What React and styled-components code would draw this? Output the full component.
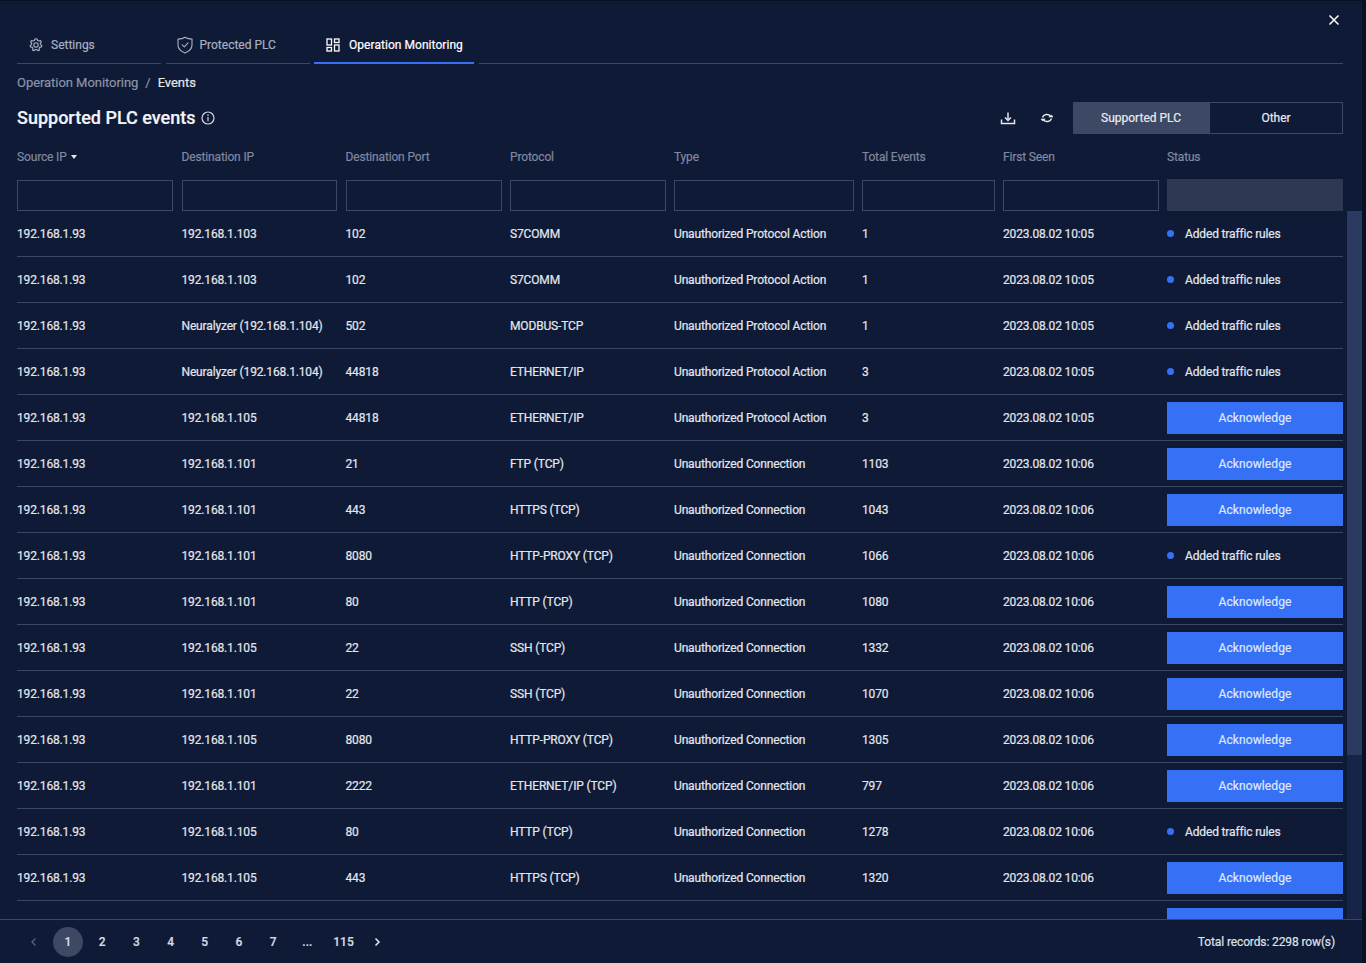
import React from 'react';
import styled, { createGlobalStyle } from 'styled-components';

const rowsData = [
  ['192.168.1.93', '192.168.1.103', '102', 'S7COMM', 'Unauthorized Protocol Action', '1', '2023.08.02 10:05', false],
  ['192.168.1.93', '192.168.1.103', '102', 'S7COMM', 'Unauthorized Protocol Action', '1', '2023.08.02 10:05', false],
  ['192.168.1.93', 'Neuralyzer (192.168.1.104)', '502', 'MODBUS-TCP', 'Unauthorized Protocol Action', '1', '2023.08.02 10:05', false],
  ['192.168.1.93', 'Neuralyzer (192.168.1.104)', '44818', 'ETHERNET/IP', 'Unauthorized Protocol Action', '3', '2023.08.02 10:05', false],
  ['192.168.1.93', '192.168.1.105', '44818', 'ETHERNET/IP', 'Unauthorized Protocol Action', '3', '2023.08.02 10:05', true],
  ['192.168.1.93', '192.168.1.101', '21', 'FTP (TCP)', 'Unauthorized Connection', '1103', '2023.08.02 10:06', true],
  ['192.168.1.93', '192.168.1.101', '443', 'HTTPS (TCP)', 'Unauthorized Connection', '1043', '2023.08.02 10:06', true],
  ['192.168.1.93', '192.168.1.101', '8080', 'HTTP-PROXY (TCP)', 'Unauthorized Connection', '1066', '2023.08.02 10:06', false],
  ['192.168.1.93', '192.168.1.101', '80', 'HTTP (TCP)', 'Unauthorized Connection', '1080', '2023.08.02 10:06', true],
  ['192.168.1.93', '192.168.1.105', '22', 'SSH (TCP)', 'Unauthorized Connection', '1332', '2023.08.02 10:06', true],
  ['192.168.1.93', '192.168.1.101', '22', 'SSH (TCP)', 'Unauthorized Connection', '1070', '2023.08.02 10:06', true],
  ['192.168.1.93', '192.168.1.105', '8080', 'HTTP-PROXY (TCP)', 'Unauthorized Connection', '1305', '2023.08.02 10:06', true],
  ['192.168.1.93', '192.168.1.101', '2222', 'ETHERNET/IP (TCP)', 'Unauthorized Connection', '797', '2023.08.02 10:06', true],
  ['192.168.1.93', '192.168.1.105', '80', 'HTTP (TCP)', 'Unauthorized Connection', '1278', '2023.08.02 10:06', false],
  ['192.168.1.93', '192.168.1.105', '443', 'HTTPS (TCP)', 'Unauthorized Connection', '1320', '2023.08.02 10:06', true],
];

const columns = ['Source IP', 'Destination IP', 'Destination Port', 'Protocol', 'Type', 'Total Events', 'First Seen', 'Status'];
const pages = ['1', '2', '3', '4', '5', '6', '7', '...', '115'];
const gridCols = '164.5px 164px 164.5px 164px 188px 141px 164px 176px';

const GlobalStyle = createGlobalStyle`
  html, body { margin: 0; padding: 0; background: #0a1024; }
  body { font-family: Roboto, "Liberation Sans", sans-serif; overflow: hidden; -webkit-text-stroke: 0.2px; }
`;

const Panel = styled.div`
  width: 1362px;
  height: 962px;
  margin-top: 1px;
  background: #0f1a36;
  position: relative;
  display: flex;
  flex-direction: column;
`;

const CloseButton = styled.button`
  position: absolute;
  top: 12px;
  right: 21px;
  width: 14px;
  height: 14px;
  padding: 0;
  border: 0;
  background: none;
  color: #fff;
  display: flex;
`;

const Tabs = styled.div`
  display: flex;
  gap: 4.5px;
  height: 63px;
  margin: 0 19px 0 17px;
  padding-top: 25px;
  box-sizing: border-box;
`;

const TabItem = styled.div`
  width: ${p => p.$width}px;
  height: 38px;
  box-sizing: border-box;
  display: flex;
  align-items: center;
  gap: ${p => (p.$active ? 9 : 7)}px;
  padding-left: ${p => p.$pad}px;
  padding-top: ${p => (p.$active ? 2 : 1)}px;
  font-size: 12px;
  letter-spacing: ${p => (p.$active ? '0.05px' : '0')};
  color: ${p => (p.$active ? '#ffffff' : '#a9b0c0')};
  border-bottom: ${p => (p.$active ? '2px solid #3671f5' : '1px solid #3b4663')};
`;

const TabFiller = styled.div`
  flex: 1;
  height: 38px;
  box-sizing: border-box;
  border-bottom: 1px solid #3b4663;
`;

const Crumbs = styled.div`
  display: flex;
  gap: 7px;
  height: 38px;
  box-sizing: border-box;
  padding: 0 0 2px 17px;
  align-items: center;
  font-size: 13px;
  letter-spacing: -0.05px;
  color: #8c94a8;
`;

const CrumbCurrent = styled.span`
  color: #e4e7ec;
`;

const TitleBar = styled.div`
  display: flex;
  align-items: center;
  height: 32px;
  margin: 0 19px 0 17px;
`;

const Title = styled.h1`
  margin: 0;
  padding-bottom: 1px;
  font-size: 18px;
  font-weight: 500;
  color: #f2f4f7;
`;

const InfoIcon = styled.span`
  display: flex;
  margin-left: 5px;
  color: #d5d8df;
`;

const Actions = styled.div`
  margin-left: auto;
  display: flex;
  align-items: center;
`;

const IconButton = styled.span`
  display: flex;
  margin-right: ${p => p.$gap}px;
  color: #e4e7ec;
`;

const Toggle = styled.div`
  width: ${p => p.$width}px;
  height: 32px;
  box-sizing: border-box;
  display: flex;
  align-items: center;
  justify-content: center;
  font-size: 12px;
  color: #e8eaef;
  background: ${p => (p.$active ? '#3d4864' : 'transparent')};
  border: 1px solid #3d4864;
`;

const Head = styled.div`
  display: grid;
  grid-template-columns: ${gridCols};
  margin-left: 17px;
  height: 29px;
  margin-top: 8px;
  align-items: center;
`;

const HeadCell = styled.div`
  font-size: 12px;
  letter-spacing: -0.15px;
  color: #8089a0;
  display: flex;
  align-items: center;
  gap: 4px;
`;

const SortCaret = styled.span`
  width: 0;
  height: 0;
  border-left: 3.5px solid transparent;
  border-right: 3.5px solid transparent;
  border-top: 4px solid #e4e7ec;
`;

const Filters = styled.div`
  display: grid;
  grid-template-columns: ${gridCols};
  margin-left: 17px;
  height: 32px;
  margin-top: 8px;
`;

const FilterInput = styled.input`
  width: calc(100% - 8.5px);
  height: 31px;
  margin: 1px 0 0;
  box-sizing: border-box;
  background: transparent;
  border: 1px solid #3d4864;
  outline: none;
  padding: 0;
`;

const FilterBlank = styled.div`
  background: #2e3853;
  height: 32px;
`;

const ScrollArea = styled.div`
  position: relative;
  flex: 1;
  min-height: 0;
  overflow: hidden;
  padding: 0 19px 0 17px;
  border-bottom: 1px solid #3b4663;
`;

const Row = styled.div`
  display: grid;
  grid-template-columns: ${gridCols};
  height: 46px;
  box-sizing: border-box;
  align-items: center;
  border-bottom: 1px solid #3b4663;
  font-size: 12px;
  color: #e4e7ec;
`;

const Cell = styled.div`
  letter-spacing: -0.15px;
  white-space: nowrap;
`;

const Ack = styled.button`
  width: 176px;
  height: 32px;
  padding: 0;
  border: 0;
  background: #3671f5;
  color: #dfe8fd;
  font: inherit;
  letter-spacing: 0.1px;
`;

const StatusText = styled.div`
  display: flex;
  align-items: center;
  gap: 11px;
  letter-spacing: -0.15px;
`;

const Dot = styled.span`
  width: 7px;
  height: 7px;
  border-radius: 50%;
  background: #3671f5;
`;

const CutRow = styled.div`
  height: 18px;
  display: flex;
  justify-content: flex-end;
  padding-top: 7px;
  box-sizing: border-box;
`;

const CutButton = styled.div`
  width: 176px;
  height: 11px;
  background: #3671f5;
`;

const ScrollTrack = styled.div`
  position: absolute;
  top: 0;
  bottom: 0;
  right: 0;
  width: 15px;
  background: #16244a;
`;

const ScrollThumb = styled.div`
  height: 544px;
  background: #2b3a60;
`;

const Footer = styled.div`
  height: 43px;
  display: flex;
  align-items: center;
  margin: 0 27px 0 17px;
  font-size: 12px;
  color: #dfe2e8;
`;

const Pager = styled.div`
  display: flex;
  align-items: center;
  flex: 1;
`;

const ArrowPrev = styled.span`
  display: flex;
  width: 36px;
  padding-left: 13px;
  box-sizing: border-box;
  color: #59627a;
`;

const ArrowNext = styled.span`
  display: flex;
  margin-left: 8px;
  color: #e4e7ec;
`;

const PageBtn = styled.span`
  width: ${p => (p.$wide ? 34 : 30)}px;
  height: 30px;
  margin-right: 4.2px;
  border-radius: 50%;
  display: flex;
  align-items: center;
  justify-content: center;
  font-weight: 500;
  background: ${p => (p.$active ? '#3d4864' : 'transparent')};
  color: #d8dbe2;
`;

const Total = styled.div`
  letter-spacing: -0.12px;
`;

const Glyph = ({ size = 16, children, sw = 1.3 }) => (
  <svg width={size} height={size} viewBox="0 0 16 16" fill="none" stroke="currentColor" strokeWidth={sw} strokeLinecap="round" strokeLinejoin="round">
    {children}
  </svg>
);

const GearIcon = () => (
  <Glyph sw={1.1}>
    <path d="M8 1.8 L9.1 2 L9.6 3.5 L11 4.1 L12.5 3.5 L13.4 4.9 L12.3 6 L12.4 7.5 L13.9 8.4 L13.5 10 L11.9 10.1 L11 11.3 L11.5 12.9 L10 13.7 L8.9 12.6 L7.1 12.6 L6 13.7 L4.5 12.9 L5 11.3 L4.1 10.1 L2.5 10 L2.1 8.4 L3.6 7.5 L3.7 6 L2.6 4.9 L3.5 3.5 L5 4.1 L6.4 3.5 L6.9 2 Z" />
    <circle cx="8" cy="7.9" r="2.2" />
  </Glyph>
);

const ShieldIcon = () => (
  <svg width="16" height="18" viewBox="0 0 16 18" fill="none" stroke="currentColor" strokeWidth="1.1" strokeLinejoin="round" strokeLinecap="round">
    <path d="M8 1.2 C10 2.4 12.5 3 15 3.1 L15 9 C15 12.6 12 15.4 8 17 C4 15.4 1 12.6 1 9 L1 3.1 C3.5 3 6 2.4 8 1.2 Z" />
    <path d="M5.2 8.8 L7.3 10.8 L11 6.8" />
  </svg>
);

const GridIcon = () => (
  <svg width="14" height="14" viewBox="0 0 14 14" fill="none" stroke="currentColor" strokeWidth="1.3">
    <rect x="1" y="1" width="4.5" height="6" />
    <rect x="8.5" y="1" width="4.5" height="3.5" />
    <rect x="8.5" y="7" width="4.5" height="6" />
    <rect x="1" y="9.5" width="4.5" height="3.5" />
  </svg>
);

const DownloadIcon = () => (
  <svg width="16" height="16" viewBox="0 0 16 16" fill="none" stroke="currentColor" strokeWidth="1.5">
    <path d="M1.5 9.5 V13.5 H14.5 V9.5" />
    <path d="M8 2.5 V10" />
    <path d="M5 7.5 L8 10.5 L11 7.5" />
  </svg>
);

const RefreshIcon = () => (
  <svg width="16" height="16" viewBox="0 0 16 16" fill="none" stroke="currentColor" strokeWidth="1.5">
    <path d="M3.5 7.5 A4.6 4.2 0 0 1 11.5 6" />
    <path d="M12.5 8.5 A4.6 4.2 0 0 1 4.5 10" />
    <path d="M9.8 7 H14 L12.5 5 Z" fill="currentColor" strokeWidth="0.6" />
    <path d="M6.2 9 H2 L3.5 11 Z" fill="currentColor" strokeWidth="0.6" />
  </svg>
);

export default function App() {
  return (
    <Panel>
      <GlobalStyle />
      <CloseButton aria-label="Close">
        <svg width="14" height="14" viewBox="0 0 14 14" stroke="currentColor" strokeWidth="1.5">
          <path d="M2.5 2.5 L11.5 11.5 M11.5 2.5 L2.5 11.5" />
        </svg>
      </CloseButton>

      <Tabs>
        <TabItem $width={144} $pad={11}><GearIcon />Settings</TabItem>
        <TabItem $width={144} $pad={11}><ShieldIcon />Protected PLC</TabItem>
        <TabItem $width={160} $pad={12} $active><GridIcon />Operation Monitoring</TabItem>
        <TabFiller />
      </Tabs>

      <Crumbs>
        <span>Operation Monitoring</span>
        <span>/</span>
        <CrumbCurrent>Events</CrumbCurrent>
      </Crumbs>

      <TitleBar>
        <Title>Supported PLC events</Title>
        <InfoIcon>
          <svg width="14" height="14" viewBox="0 0 14 14" fill="none" stroke="currentColor" strokeWidth="1.2">
            <circle cx="7" cy="7" r="6" />
            <path d="M7 6 V10.2" />
            <path d="M7 3.6 V5" />
          </svg>
        </InfoIcon>
        <Actions>
          <IconButton $gap={23}><DownloadIcon /></IconButton>
          <IconButton $gap={18}><RefreshIcon /></IconButton>
          <Toggle $width={136} $active>Supported PLC</Toggle>
          <Toggle $width={134}>Other</Toggle>
        </Actions>
      </TitleBar>

      <Head>
        {columns.map((c, i) => (
          <HeadCell key={c}>
            {c}
            {i === 0 && <SortCaret />}
          </HeadCell>
        ))}
      </Head>

      <Filters>
        {columns.slice(0, 7).map(c => <FilterInput key={c} aria-label={c} />)}
        <FilterBlank />
      </Filters>

      <ScrollArea>
        {rowsData.map((row, i) => (
          <Row key={i}>
            {row.slice(0, 7).map((v, j) => <Cell key={j}>{v}</Cell>)}
            {row[7] ? <Ack>Acknowledge</Ack> : <StatusText><Dot />Added traffic rules</StatusText>}
          </Row>
        ))}
        <CutRow><CutButton /></CutRow>
        <ScrollTrack><ScrollThumb /></ScrollTrack>
      </ScrollArea>

      <Footer>
        <Pager>
          <ArrowPrev>
            <svg width="8" height="10" viewBox="0 0 8 10" fill="none" stroke="currentColor" strokeWidth="1.3"><path d="M5.5 1.5 L2 5 L5.5 8.5" /></svg>
          </ArrowPrev>
          {pages.map(p => <PageBtn key={p} $active={p === '1'} $wide={p === '115'}>{p}</PageBtn>)}
          <ArrowNext>
            <svg width="8" height="10" viewBox="0 0 8 10" fill="none" stroke="currentColor" strokeWidth="1.5"><path d="M2.5 1.5 L6 5 L2.5 8.5" /></svg>
          </ArrowNext>
        </Pager>
        <Total>Total records: 2298 row(s)</Total>
      </Footer>
    </Panel>
  );
}
